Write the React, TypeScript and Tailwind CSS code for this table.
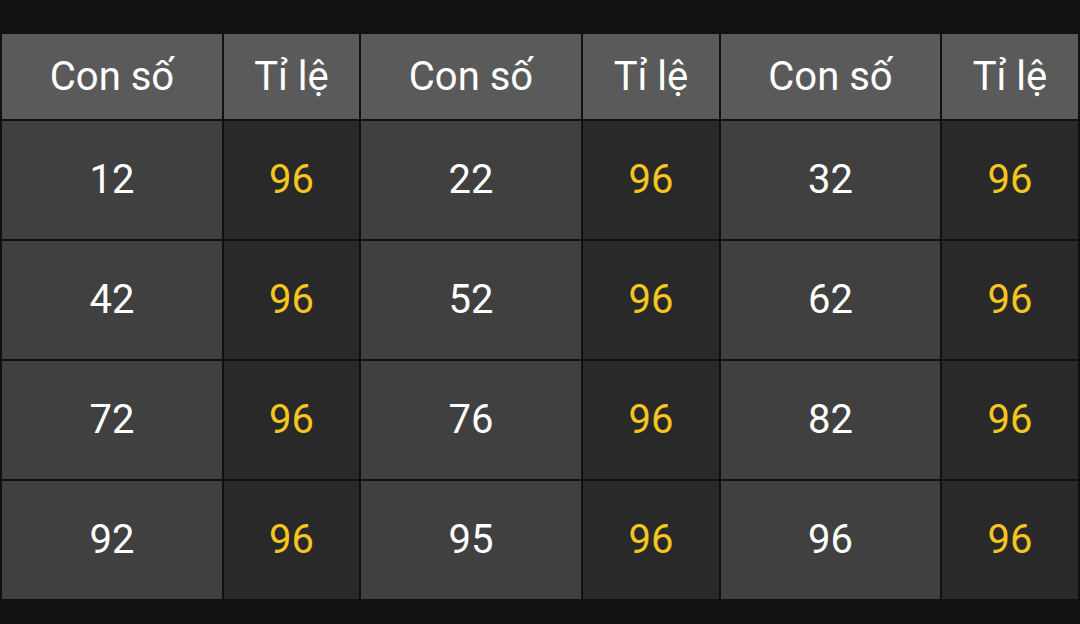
const rows = [
  ['12', '96', '22', '96', '32', '96'],
  ['42', '96', '52', '96', '62', '96'],
  ['72', '96', '76', '96', '82', '96'],
  ['92', '96', '95', '96', '96', '96'],
];

const headers = ['Con số', 'Tỉ lệ', 'Con số', 'Tỉ lệ', 'Con số', 'Tỉ lệ'];

export default function App() {
  return (
    <div
      className="w-[1080px] h-[624px] bg-[#111111] pt-[34px]"
      style={{ fontFamily: 'Roboto, "Noto Sans", sans-serif' }}
    >
      <div className="grid grid-cols-[220px_135px_220px_136px_219px_136px] grid-rows-[85px_118px_118px_118px_118px] gap-[2px] px-[2px]">
        {headers.map((h, i) => (
          <div
            key={'h' + i}
            className="bg-[#5a5a5a] flex items-center justify-center text-white text-[40px] leading-none"
          >
            {h}
          </div>
        ))}
        {rows.map((r, ri) =>
          r.map((c, ci) => (
            <div
              key={ri + '-' + ci}
              className={
                ci % 2 === 0
                  ? 'bg-[#404040] flex items-center justify-center text-white text-[40px] leading-none'
                  : 'bg-[#292929] flex items-center justify-center text-[#f5c61f] text-[40px] leading-none'
              }
            >
              {c}
            </div>
          ))
        )}
      </div>
    </div>
  );
}
